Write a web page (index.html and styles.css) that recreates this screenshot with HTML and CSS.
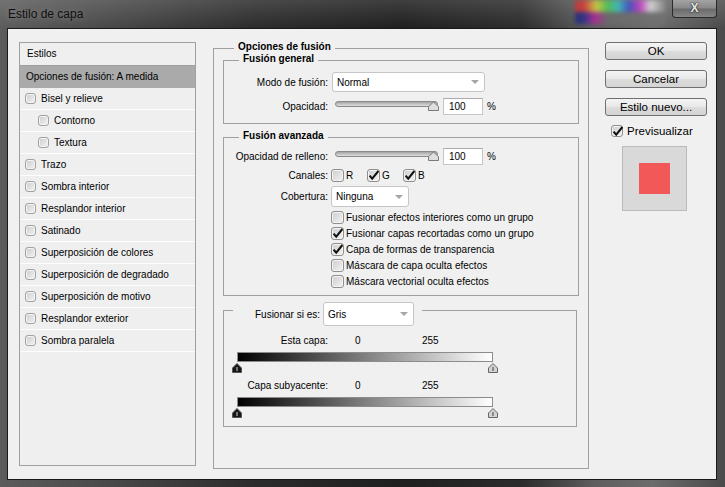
FILE: index.html
```html
<!DOCTYPE html>
<html lang="es">
<head>
    <meta charset="UTF-8">
    <meta name="viewport" content="width=device-width, initial-scale=1.0">
    <title>Estilo de capa</title>
    <link rel="stylesheet" href="styles.css">
</head>
<body>
<div class="window">
    <div class="titlebar">
        <span class="title">Estilo de capa</span>
        <div class="swatches">
            <div class="swatch-row top"></div>
            <div class="swatch-row bottom"></div>
        </div>
        <button class="close" type="button">X</button>
    </div>

    <div class="client">
        <div class="styles-list">
            <div class="list-head">Estilos</div>
            <div class="list-item selected">Opciones de fusión: A medida</div>
            <div class="list-item"><span class="cb small"></span>Bisel y relieve</div>
            <div class="list-item sub"><span class="cb small"></span>Contorno</div>
            <div class="list-item sub"><span class="cb small"></span>Textura</div>
            <div class="list-item"><span class="cb small"></span>Trazo</div>
            <div class="list-item"><span class="cb small"></span>Sombra interior</div>
            <div class="list-item"><span class="cb small"></span>Resplandor interior</div>
            <div class="list-item"><span class="cb small"></span>Satinado</div>
            <div class="list-item"><span class="cb small"></span>Superposición de colores</div>
            <div class="list-item"><span class="cb small"></span>Superposición de degradado</div>
            <div class="list-item"><span class="cb small"></span>Superposición de motivo</div>
            <div class="list-item"><span class="cb small"></span>Resplandor exterior</div>
            <div class="list-item"><span class="cb small"></span>Sombra paralela</div>
        </div>

        <div class="group main-group">
            <div class="group-title">Opciones de fusión</div>

            <div class="group general">
                <div class="group-title">Fusión general</div>
                <div class="row select-row">
                    <span class="row-label">Modo de fusión:</span>
                    <div class="select mode"><span>Normal</span><i class="arrow"></i></div>
                </div>
                <div class="row slider-row">
                    <span class="row-label">Opacidad:</span>
                    <div class="slider">
                        <div class="track"></div>
                        <svg class="thumb" width="11" height="9" viewBox="0 0 11 9"><path d="M0.5 8.5V4.6L4.4 1Q5.5 0 6.6 1L10.5 4.6V8.5Z" fill="#dedede" stroke="#7a7a7a"/></svg>
                    </div>
                    <div class="num">100</div>
                    <span class="pct">%</span>
                </div>
            </div>

            <div class="group advanced">
                <div class="group-title">Fusión avanzada</div>
                <div class="row slider-row">
                    <span class="row-label">Opacidad de relleno:</span>
                    <div class="slider">
                        <div class="track"></div>
                        <svg class="thumb" width="11" height="9" viewBox="0 0 11 9"><path d="M0.5 8.5V4.6L4.4 1Q5.5 0 6.6 1L10.5 4.6V8.5Z" fill="#dedede" stroke="#7a7a7a"/></svg>
                    </div>
                    <div class="num">100</div>
                    <span class="pct">%</span>
                </div>
                <div class="row channels">
                    <span class="row-label">Canales:</span>
                    <span class="chan first"><span class="cb"></span>R</span>
                    <span class="chan"><span class="cb"><svg width="13" height="13" viewBox="0 0 13 13"><path d="M2.6 6.6L5.2 9.6L11.4 2" fill="none" stroke="#111" stroke-width="2"/></svg></span>G</span>
                    <span class="chan"><span class="cb"><svg width="13" height="13" viewBox="0 0 13 13"><path d="M2.6 6.6L5.2 9.6L11.4 2" fill="none" stroke="#111" stroke-width="2"/></svg></span>B</span>
                </div>
                <div class="row cover-row">
                    <span class="row-label">Cobertura:</span>
                    <div class="select cover"><span>Ninguna</span><i class="arrow"></i></div>
                </div>
                <div class="options">
                    <div class="opt"><span class="cb"></span>Fusionar efectos interiores como un grupo</div>
                    <div class="opt"><span class="cb"><svg width="13" height="13" viewBox="0 0 13 13"><path d="M2.6 6.6L5.2 9.6L11.4 2" fill="none" stroke="#111" stroke-width="2"/></svg></span>Fusionar capas recortadas como un grupo</div>
                    <div class="opt"><span class="cb"><svg width="13" height="13" viewBox="0 0 13 13"><path d="M2.6 6.6L5.2 9.6L11.4 2" fill="none" stroke="#111" stroke-width="2"/></svg></span>Capa de formas de transparencia</div>
                    <div class="opt"><span class="cb"></span>Máscara de capa oculta efectos</div>
                    <div class="opt"><span class="cb"></span>Máscara vectorial oculta efectos</div>
                </div>
            </div>

            <div class="group blend-if">
                <div class="blend-title">
                    <span class="blend-label">Fusionar si es:</span>
                    <div class="select gray"><span>Gris</span><i class="arrow"></i></div>
                </div>

                <div class="range-head first">
                    <span class="row-label">Esta capa:</span>
                    <span class="val-low">0</span>
                    <span>255</span>
                </div>
                <div class="ramp"></div>
                <div class="ramp-thumbs">
                    <svg width="10" height="10" viewBox="0 0 10 10"><path d="M0.5 9.5V5L5 0.5L9.5 5V9.5Z" fill="#161616" stroke="#555"/><path d="M5 4V8" stroke="#d0d0d0"/></svg>
                    <svg width="10" height="10" viewBox="0 0 10 10"><path d="M0.5 9.5V5L5 0.5L9.5 5V9.5Z" fill="#d2d2d2" stroke="#666"/><path d="M5 4V8" stroke="#444"/></svg>
                </div>

                <div class="range-head">
                    <span class="row-label">Capa subyacente:</span>
                    <span class="val-low">0</span>
                    <span>255</span>
                </div>
                <div class="ramp"></div>
                <div class="ramp-thumbs">
                    <svg width="10" height="10" viewBox="0 0 10 10"><path d="M0.5 9.5V5L5 0.5L9.5 5V9.5Z" fill="#161616" stroke="#555"/><path d="M5 4V8" stroke="#d0d0d0"/></svg>
                    <svg width="10" height="10" viewBox="0 0 10 10"><path d="M0.5 9.5V5L5 0.5L9.5 5V9.5Z" fill="#d2d2d2" stroke="#666"/><path d="M5 4V8" stroke="#444"/></svg>
                </div>
            </div>
        </div>

        <div class="side">
            <button class="btn" type="button">OK</button>
            <button class="btn" type="button">Cancelar</button>
            <button class="btn" type="button">Estilo nuevo...</button>
            <div class="preview-check">
                <span class="cb"><svg width="13" height="13" viewBox="0 0 13 13"><path d="M2.6 6.6L5.2 9.6L11.4 2" fill="none" stroke="#111" stroke-width="2"/></svg></span>
                Previsualizar
            </div>
            <div class="preview">
                <div class="preview-swatch"></div>
            </div>
        </div>
    </div>
</div>
</body>
</html>
```

FILE: styles.css
```css
* {
    box-sizing: border-box;
}
body {
    margin: 0;
    background-color: #1e1e1e;
    font-family: "Liberation Sans", Arial, sans-serif;
    font-size: 10px;
    color: #000;
}
.window {
    width: 725px;
    height: 487px;
    display: flex;
    flex-direction: column;
    padding-bottom: 7px;
    background:
        linear-gradient(to bottom, rgba(255, 255, 255, 0.14), rgba(255, 255, 255, 0) 28px),
        linear-gradient(to right, #5c5c5c 0%, #4a4a4a 14%, #2c2c2c 35%, #1f1f1f 55%, #2c2c2c 72%, #5e5e5e 82%, #6c6c6c 90%, #4a4a4a 100%);
}

/* title bar */
.titlebar {
    height: 28px;
    flex: none;
    display: flex;
    align-items: flex-start;
    padding: 0 8px;
}
.title {
    margin-top: 7px;
    font-size: 12px;
    line-height: 14px;
    color: #101010;
    text-shadow: 0 0 6px rgba(255, 255, 255, 0.25);
}
.swatches {
    margin-left: auto;
    width: 90px;
    height: 24px;
    filter: blur(2px);
    opacity: 0.85;
}
.swatch-row {
    height: 12px;
}
.swatch-row.top {
    background: linear-gradient(to right, #c83434 0%, #d93a3a 10%, #d6d63a 24%, #4fc94f 36%, #39c2c2 48%, #3a4fc8 60%, #c83ac8 72%, #e0e0e0 84%, #8a8a8a 100%);
}
.swatch-row.bottom {
    background: linear-gradient(to right, #232a7a 0%, #2a2e8a 10%, #b8249a 22%, #6a6a6a 36%, #727272 100%);
}
.close {
    margin-left: 7px;
    width: 45px;
    height: 18px;
    padding: 0;
    border: 1px solid #2a2a2a;
    border-top: none;
    border-radius: 0 0 4px 4px;
    background: linear-gradient(#a4a4a4 0%, #8a8a8a 45%, #6c6c6c 55%, #868686 100%);
    color: #e6e6e6;
    font-family: "Liberation Sans", Arial, sans-serif;
    font-size: 12px;
    font-weight: bold;
    line-height: 17px;
    text-shadow: 0 0 2px #222, 0 0 1px #222;
}

/* dialog body */
.client {
    flex: 1;
    margin: 0 8px 0 7px;
    border: 1px solid #1a1a1a;
    background-color: #f0f0f0;
    display: flex;
    align-items: flex-start;
    padding: 13px 0 0 11px;
}

/* left list */
.styles-list {
    flex: none;
    width: 177px;
    height: 424px;
    border: 1px solid #a0a0a0;
    background-color: #efefef;
}
.list-head {
    height: 23px;
    line-height: 22px;
    padding-left: 7px;
    border-bottom: 1px solid #a0a0a0;
}
.list-item {
    height: 22px;
    display: flex;
    align-items: center;
    padding-left: 5px;
    border-bottom: 1px solid #fdfdfd;
}
.list-item.selected {
    background-color: #aaaaaa;
    padding-left: 6px;
    border-bottom-color: #aaaaaa;
}
.list-item.sub {
    padding-left: 18px;
}
.list-item .cb {
    margin-right: 5px;
}

/* checkboxes */
.cb {
    position: relative;
    flex: none;
    width: 13px;
    height: 13px;
    border: 1px solid #8e8e8e;
    border-radius: 3px;
    background: linear-gradient(135deg, #cdcdcd, #f3f3f3);
    box-shadow: inset 0 0 0 1px #f4f4f4;
}
.cb.small {
    width: 11px;
    height: 11px;
    border-color: #a2a2a2;
}
.cb svg {
    position: absolute;
    left: -1px;
    top: -1px;
    overflow: visible;
}

/* groups */
.group {
    border: 1px solid #a0a0a0;
    margin: 0 9px;
    padding-bottom: 8px;
}
.group-title {
    display: table;
    margin: -8px 0 0 15px;
    padding: 0 4px;
    background-color: #f0f0f0;
    font-weight: bold;
    line-height: 12px;
}
.main-group {
    flex: none;
    width: 376px;
    height: 421px;
    margin: 6px 0 0 17px;
    padding: 0;
}
.main-group > .group-title {
    margin-left: 20px;
}
.general {
    margin-top: 7px;
}
.advanced {
    margin-top: 13px;
    padding-bottom: 6px;
}
.blend-if {
    margin: 14px 11px 0 9px;
}

/* rows */
.row {
    display: flex;
    align-items: center;
}
.row-label {
    flex: none;
    width: 104px;
    text-align: right;
}
.select-row {
    margin-top: 7px;
    height: 20px;
}
.slider-row {
    margin-top: 6px;
    height: 17px;
}
.channels {
    margin-top: 3px;
    height: 14px;
}
.cover-row {
    margin-top: 4px;
    height: 21px;
}
.select {
    display: flex;
    align-items: center;
    justify-content: space-between;
    height: 100%;
    background-color: #fff;
    border: 1px solid #c6c6c6;
    border-radius: 3px;
    padding: 0 5px 0 4px;
}
.arrow {
    width: 0;
    height: 0;
    border-left: 4px solid transparent;
    border-right: 4px solid transparent;
    border-top: 4px solid #a6a6a6;
}
.mode {
    width: 153px;
    margin-left: 4px;
}
.cover {
    width: 78px;
    margin-left: 3px;
}
.slider {
    position: relative;
    width: 105px;
    height: 17px;
    margin-left: 7px;
}
.track {
    width: 103px;
    height: 6px;
    margin-top: 3px;
    border: 1px solid #8a8a8a;
    border-radius: 3px;
    background: linear-gradient(#a4a4a4, #dedede);
}
.thumb {
    position: absolute;
    right: 1px;
    top: 4px;
}
.num {
    width: 40px;
    height: 17px;
    margin-left: 3px;
    padding-left: 5px;
    line-height: 15px;
    background-color: #fff;
    border: 1px solid #c6c6c6;
    border-top-color: #ababab;
}
.pct {
    margin-left: 4px;
}
.chan {
    display: flex;
    align-items: center;
    width: 36px;
}
.chan.first {
    margin-left: 3px;
}
.chan .cb {
    margin-right: 2px;
}
.options {
    margin: 2px 0 0 107px;
}
.opt {
    display: flex;
    align-items: center;
    height: 16px;
}
.opt .cb {
    margin-right: 2px;
}

/* blend if */
.blend-title {
    display: flex;
    align-items: center;
    width: max-content;
    height: 24px;
    margin: -9px 0 0 9px;
    padding-right: 8px;
    background-color: #f0f0f0;
}
.blend-label {
    width: 87px;
    text-align: right;
}
.gray {
    width: 91px;
    margin-left: 3px;
}
.range-head {
    display: flex;
    margin-top: 7px;
    line-height: 12px;
}
.range-head.first {
    margin-top: 9px;
}
.val-low {
    width: 67px;
    margin-left: 27px;
}
.ramp {
    width: 256px;
    height: 10px;
    margin: 5px 0 0 13px;
    border: 1px solid #8c8c8c;
    background: linear-gradient(to right, #000, #fff);
}
.ramp-thumbs {
    display: flex;
    justify-content: space-between;
    width: 266px;
    height: 10px;
    margin: 1px 0 0 8px;
}

/* right column */
.side {
    flex: none;
    width: 102px;
    margin-left: 16px;
}
.btn {
    display: block;
    width: 102px;
    height: 18px;
    padding: 0;
    border: 1px solid #707070;
    border-radius: 3px;
    background: linear-gradient(#f4f4f4 0%, #e8e8e8 50%, #dcdcdc 51%, #d4d4d4 100%);
    font-family: "Liberation Sans", Arial, sans-serif;
    font-size: 11.5px;
    color: #000;
}
.btn + .btn {
    margin-top: 10px;
}
.preview-check {
    display: flex;
    align-items: center;
    height: 14px;
    margin: 8px 0 0 6px;
    font-size: 11.5px;
}
.preview-check .cb {
    width: 12px;
    height: 12px;
    margin-right: 4px;
}
.preview {
    display: flex;
    align-items: center;
    justify-content: center;
    width: 65px;
    height: 65px;
    margin: 8px 0 0 17px;
    border: 1px solid #bababa;
    background-color: #d9d9d9;
}
.preview-swatch {
    width: 31px;
    height: 31px;
    background-color: #f25858;
}
```
